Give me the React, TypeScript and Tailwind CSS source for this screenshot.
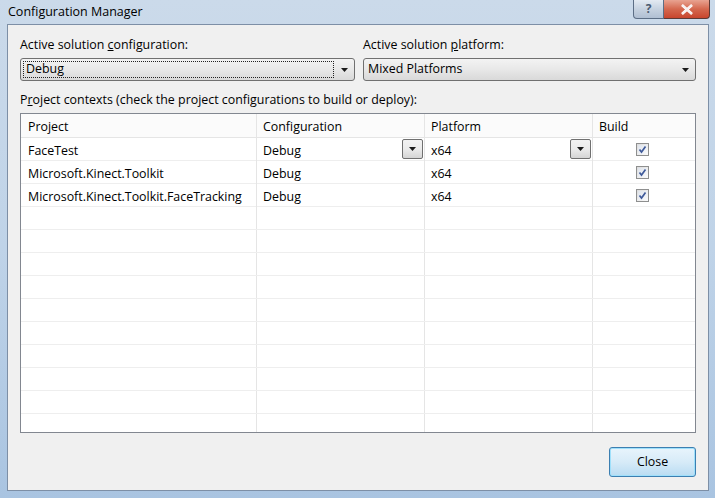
import React from "react";

const font = { fontFamily: '"Open Sans", "Noto Sans", sans-serif' };

function Arrow() {
  return (
    <svg width="7" height="4" viewBox="0 0 7 4">
      <path d="M0 0 H7 L3.5 4 Z" fill="#1a1a1a" />
    </svg>
  );
}

function Check() {
  return (
    <div className="w-[13px] h-[13px] border border-[#8e8f8f] bg-gradient-to-br from-[#dcdcdc] to-[#fbfbfb] flex items-center justify-center">
      <div className="w-[9px] h-[9px] bg-gradient-to-br from-[#dfe4ec] to-[#f8f9fb] flex items-center justify-center">
        <svg width="9" height="9" viewBox="0 0 9 9">
          <path d="M1.5 4.5 L3.5 7 L7.5 1.5" stroke="#3f5a9a" strokeWidth="1.7" fill="none" />
        </svg>
      </div>
    </div>
  );
}

function CellDrop() {
  return (
    <div className="w-[21px] h-[20px] border border-[#707070] rounded-[2px] bg-gradient-to-b from-[#f2f2f2] via-[#ebebeb] to-[#d5d5d5] flex items-center justify-center">
      <Arrow />
    </div>
  );
}

const rows = [
  { p: "FaceTest", c: "Debug", pl: "x64", drop: true },
  { p: "Microsoft.Kinect.Toolkit", c: "Debug", pl: "x64" },
  { p: "Microsoft.Kinect.Toolkit.FaceTracking", c: "Debug", pl: "x64" },
];

export default function App() {
  return (
    <div
      className="w-[715px] h-[498px] overflow-hidden flex flex-col bg-gradient-to-b from-[#cbdaea] via-[#bfd3e8] to-[#a9c4e1] text-[12.4px] text-black"
      style={font}
    >
      {/* title bar */}
      <div className="h-[24px] flex items-start shrink-0">
        <div className="pl-[8px] pt-[3px] text-[12.5px] text-black">Configuration Manager</div>
        <div className="ml-auto mr-[5px] flex">
          <div className="w-[31px] h-[19px] border border-[#5c6e85] border-t-0 rounded-bl-[4px] bg-gradient-to-b from-[#e3eaf2] via-[#c6d2e0] to-[#b0bfd2] flex items-center justify-center text-[#4a5a70] font-bold text-[12px]">
            ?
          </div>
          <div className="w-[46px] h-[19px] border border-[#5c3a36] border-t-0 border-l-0 rounded-br-[4px] bg-gradient-to-b from-[#e8a391] via-[#d4684f] to-[#c8452d] flex items-center justify-center">
            <svg width="14" height="11" viewBox="0 0 14 11">
              <path d="M2 1 L12 10 M12 1 L2 10" stroke="#fff" strokeWidth="2.6" />
              <path d="M2 1 L12 10 M12 1 L2 10" stroke="#f6eeee" strokeWidth="1.4" />
            </svg>
          </div>
        </div>
      </div>
      {/* client */}
      <div className="flex-1 ml-[7px] mr-[6px] mb-[7px] border border-[#7d8fa6] bg-[#f0f0f0] flex flex-col px-[12px] pt-[10px]">
        <div className="flex gap-[8px]">
          <div className="w-[335px] flex flex-col">
            <div className="h-[18px] leading-[18px] pt-[1px]">
              Active solution <span className="underline">c</span>onfiguration:
            </div>
            <div className="mt-[5px] h-[23px] border border-[#707070] rounded-[3px] bg-gradient-to-b from-[#f3f3f3] via-[#e8e8e8] to-[#d9d9d9] flex items-center pl-[2px] pr-[6px]">
              <div className="flex-1 h-[17px] border border-dotted border-[#222] flex items-center pl-[2px] leading-none">
                Debug
              </div>
              <div className="w-[14px] flex justify-end">
                <Arrow />
              </div>
            </div>
          </div>
          <div className="w-[333px] flex flex-col">
            <div className="h-[18px] leading-[18px] pt-[1px]">
              Active solution <span className="underline">p</span>latform:
            </div>
            <div className="mt-[5px] h-[23px] border border-[#707070] rounded-[3px] bg-gradient-to-b from-[#f3f3f3] via-[#e8e8e8] to-[#d9d9d9] flex items-center pl-[4px] pr-[6px]">
              <div className="flex-1">Mixed Platforms</div>
              <Arrow />
            </div>
          </div>
        </div>
        <div className="mt-[10px] h-[18px] leading-[18px]">
          P<span className="underline">r</span>oject contexts (check the project configurations to build or deploy):
        </div>
        {/* grid */}
        <div className="mt-[4px] w-[676px] h-[320px] border border-[#828790] bg-white overflow-hidden">
          <div className="grid grid-cols-[236px_168px_168px_99px] h-[24px] border-b border-[#e5e5e5] bg-[#fbfbfb]">
            <div className="pl-[7px] pt-[3px] flex items-center border-r border-[#e5e5e5]">Project</div>
            <div className="pl-[6px] pt-[3px] flex items-center border-r border-[#e5e5e5]">Configuration</div>
            <div className="pl-[6px] pt-[3px] flex items-center border-r border-[#e5e5e5]">Platform</div>
            <div className="pl-[6px] pt-[3px] flex items-center">Build</div>
          </div>
          {Array.from({ length: 14 }).map((_, i) => {
            const r = rows[i];
            return (
              <div key={i} className="grid grid-cols-[236px_168px_168px_99px] h-[23px] border-b border-[#eeeeee]">
                <div className="pl-[7px] pt-[4px] flex items-center border-r border-[#e5e5e5]">{r?.p}</div>
                <div className="pl-[6px] pr-[1px] flex items-center border-r border-[#e5e5e5]">
                  <span className="flex-1 pt-[4px]">{r?.c}</span>
                  {r?.drop && <CellDrop />}
                </div>
                <div className="pl-[6px] pr-[1px] flex items-center border-r border-[#e5e5e5]">
                  <span className="flex-1 pt-[4px]">{r?.pl}</span>
                  {r?.drop && <CellDrop />}
                </div>
                <div className="flex items-center justify-center pt-[1px]">{r && <Check />}</div>
              </div>
            );
          })}
        </div>
        <div className="flex justify-end mt-[14px]">
          <div className="w-[87px] h-[30px] rounded-[3px] border border-[#3c7fb1] bg-gradient-to-b from-[#e8f4fc] via-[#d7ebf8] to-[#b9dcf2] shadow-[inset_0_0_0_1px_#9fe0fb] flex items-center justify-center">
            Close
          </div>
        </div>
      </div>
    </div>
  );
}
